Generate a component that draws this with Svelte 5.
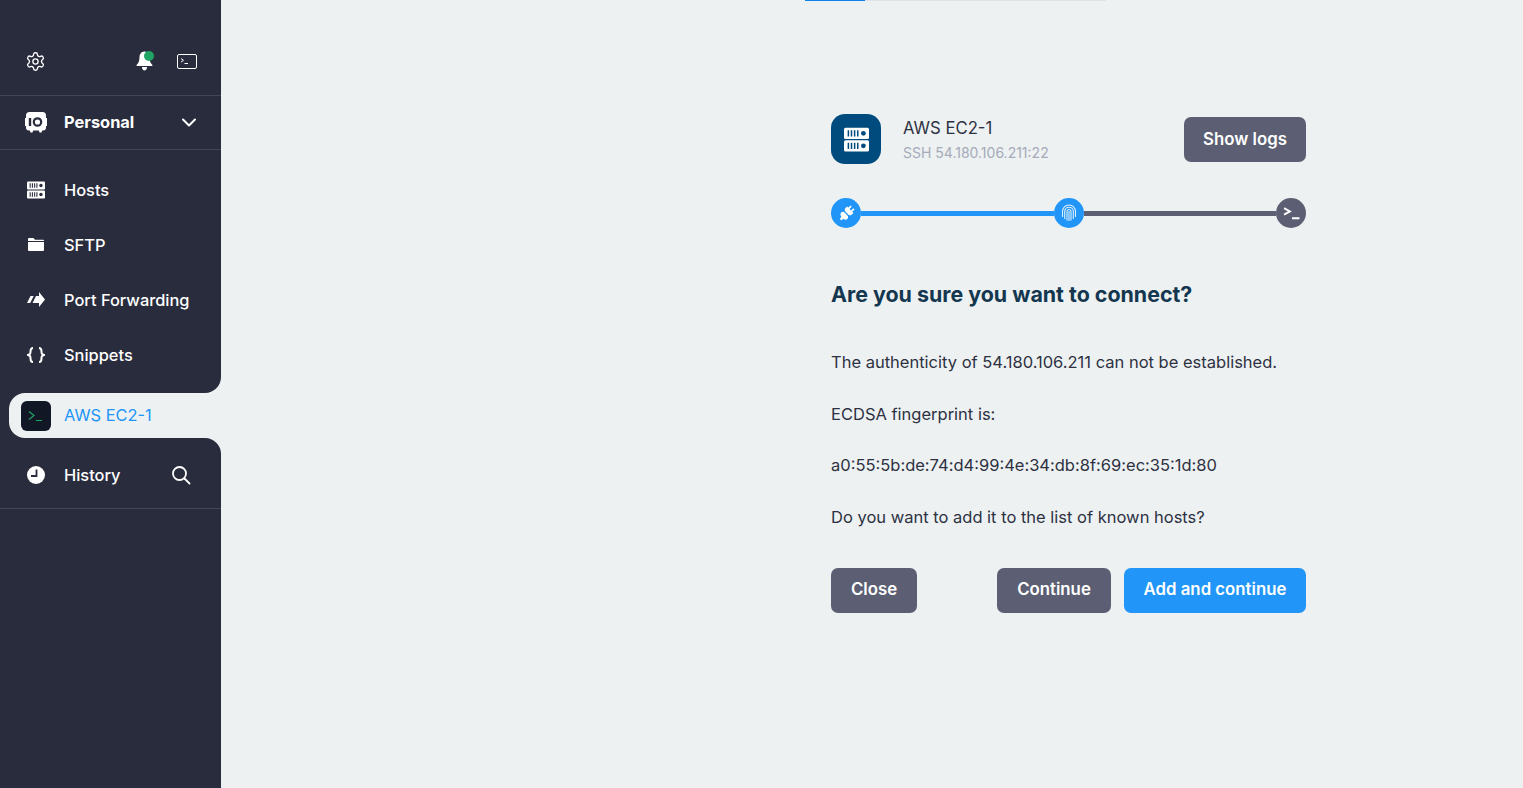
<script>
	const topItems = [
		{ label: 'Hosts', icon: 'hosts' },
		{ label: 'SFTP', icon: 'folder' },
		{ label: 'Port Forwarding', icon: 'forward' },
		{ label: 'Snippets', icon: 'braces' }
	];

	const prompts = [
		'The authenticity of 54.180.106.211 can not be established.',
		'ECDSA fingerprint is:',
		'a0:55:5b:de:74:d4:99:4e:34:db:8f:69:ec:35:1d:80',
		'Do you want to add it to the list of known hosts?'
	];
</script>

{#snippet serverIcon(fill, hole, size)}
	<svg viewBox="0 0 20 20" width={size} height={size}>
		<rect x="0" y="0.5" width="20" height="9" rx="1.2" fill={fill} />
		<rect x="0" y="10.5" width="20" height="9" rx="1.2" fill={fill} />
		<path d="M3.500 2.500v5M6 2.500v5M8.500 2.500v5M11 2.500v5M3.500 12.500v5M6 12.500v5M8.500 12.500v5M11 12.500v5" stroke={hole} stroke-width="1.200" />
		<circle cx="15.500" cy="5" r="1.900" fill={hole} />
		<circle cx="15.500" cy="15" r="1.900" fill={hole} />
	</svg>
{/snippet}

<div class="page">
	<aside class="sidebar">
		<div class="upper">
			<div class="tools">
				<svg class="gear" viewBox="0 0 24 24" width="21" height="21" fill="none" stroke="#fff" stroke-width="1.500" stroke-linejoin="round">
					<circle cx="12" cy="12" r="3" />
					<path d="M12.220 2h-.44a2 2 0 0 0-2 2v.18a2 2 0 0 1-1 1.730l-.43.25a2 2 0 0 1-2 0l-.15-.08a2 2 0 0 0-2.730.73l-.22.38a2 2 0 0 0 .73 2.730l.15.1a2 2 0 0 1 1 1.720v.51a2 2 0 0 1-1 1.740l-.15.09a2 2 0 0 0-.73 2.730l.22.38a2 2 0 0 0 2.730.73l.15-.08a2 2 0 0 1 2 0l.43.25a2 2 0 0 1 1 1.730V20a2 2 0 0 0 2 2h.44a2 2 0 0 0 2-2v-.18a2 2 0 0 1 1-1.730l.43-.25a2 2 0 0 1 2 0l.15.08a2 2 0 0 0 2.730-.73l.22-.39a2 2 0 0 0-.73-2.730l-.15-.08a2 2 0 0 1-1-1.740v-.5a2 2 0 0 1 1-1.740l.15-.09a2 2 0 0 0 .73-2.730l-.22-.38a2 2 0 0 0-2.730-.73l-.15.08a2 2 0 0 1-2 0l-.43-.25a2 2 0 0 1-1-1.730V4a2 2 0 0 0-2-2z" />
				</svg>
				<span class="spacer"></span>
				<span class="bell">
					<svg viewBox="0 0 17 20" width="17" height="20">
						<path d="M8.500 0.500C5 .5 3.500 3.500 3.500 6.500c0 3.500-1 5.500-2.800 7.300-.5.500-.2 1.200.5 1.200h14.600c.7 0 1-.7.500-1.200C14.500 12 13.500 10 13.500 6.500c0-3-1.500-6-5-6z" fill="#fff" />
						<path d="M6 16h5c0 2.200-1.100 3.500-2.500 3.500S6 18.200 6 16z" fill="#fff" />
					</svg>
					<i class="dot"></i>
				</span>
				<svg class="term" viewBox="0 0 20 15" width="20" height="15" fill="none" stroke="#fff">
					<rect x=".5" y=".5" width="19" height="14" rx="1.500" />
					<path d="M4 4.500l2.500 1.800L4 8.100M7.500 9.500h3.500" stroke-width="1" />
				</svg>
			</div>
			<div class="vault">
				<svg viewBox="0 0 22 21" width="22" height="21" class="nav-icon">
					<path d="M4.500 0h13A3.500 3.500 0 0 1 21 3.500V6h1v8h-1v1.500a3 3 0 0 1-3 3h-.8l-.7 2h-2l-.7-2H8.200l-.7 2h-2l-.7-2H4a3 3 0 0 1-3-3V14H0V6h1V3.500A3.500 3.500 0 0 1 4.500 0z" fill="#fff" />
					<rect x="3.800" y="6" width="2.400" height="8" fill="#292c3d" />
					<circle cx="12.500" cy="10" r="3.700" fill="none" stroke="#292c3d" stroke-width="2.200" />
				</svg>
				<span class="vault-name">Personal</span>
				<svg class="chevron" viewBox="0 0 14 9" width="14" height="9" fill="none" stroke="#fff" stroke-width="2" stroke-linecap="round" stroke-linejoin="round">
					<path d="M1 1.500l6 6 6-6" />
				</svg>
			</div>
			<nav class="items">
				{#each topItems as item}
					<div class="item">
						<span class="icon-slot">
							{#if item.icon === 'hosts'}
								{@render serverIcon('#fff', '#292c3d', 18)}
							{:else if item.icon === 'folder'}
								<svg viewBox="0 0 16 13" width="16" height="13"><path d="M0 1a1 1 0 0 1 1-1h4.500l1.500 1.700H15a1 1 0 0 1 1 1V3H0zM0 4h16v8a1 1 0 0 1-1 1H1a1 1 0 0 1-1-1z" fill="#fff" /></svg>
							{:else if item.icon === 'forward'}
								<svg viewBox="0 0 18 15" width="18" height="15"><path d="M3.500 4h3.200L3.200 11H0zM12 0l6 7.500-6 7.500v-4H5.500L9 4h3z" fill="#fff" /></svg>
							{:else}
								<svg viewBox="0 0 18 16" width="18" height="16" fill="none" stroke="#fff" stroke-width="2">
									<path d="M6 1C3.500 1 3.500 2.500 3.500 4.500S3.500 7 1 8c2.500 1 2.500 1.500 2.500 3.500S3.500 15 6 15M12 1c2.500 0 2.500 1.500 2.500 3.500S14.500 7 17 8c-2.500 1-2.500 1.500-2.500 3.500S14.500 15 12 15" />
								</svg>
							{/if}
						</span>
						<span>{item.label}</span>
					</div>
				{/each}
			</nav>
		</div>

		<div class="tab-wrap">
			<div class="tab">
				<span class="tab-icon">
					<svg viewBox="0 0 16 12" width="16" height="12" fill="none" stroke="#1fa463" stroke-width="1.200">
						<path d="M1 1.500L6 5.500 1 9.500M8 10.500h6" />
					</svg>
				</span>
				<span class="tab-label">AWS EC2-1</span>
			</div>
		</div>

		<div class="lower">
			<div class="item history">
				<span class="icon-slot">
					<svg viewBox="0 0 18 18" width="18" height="18">
						<circle cx="9" cy="9" r="9" fill="#fff" />
						<path d="M9.500 3.500v6.500H4" fill="none" stroke="#292c3d" stroke-width="1.800" />
					</svg>
				</span>
				<span>History</span>
				<svg class="search" viewBox="0 0 20 20" width="20" height="20" fill="none" stroke="#fff" stroke-width="1.800" stroke-linecap="round">
					<circle cx="8.500" cy="8.500" r="6.500" />
					<path d="M13.500 13.500l5 5" />
				</svg>
			</div>
		</div>
	</aside>

	<main class="main">
		<div class="progress"><i></i></div>
		<section class="dialog">
			<header class="host">
				<span class="host-icon">{@render serverIcon('#fff', '#004b7d', 25)}</span>
				<div class="host-text">
					<div class="host-name">AWS EC2-1</div>
					<div class="host-addr">SSH 54.180.106.211:22</div>
				</div>
				<button class="btn logs">Show logs</button>
			</header>

			<div class="stepper">
				<span class="step on">
					<svg viewBox="0 0 16 16" width="17" height="17" fill="#fff">
						<g transform="rotate(45 8 8)">
							<path d="M5.300 0h1.600v3H5.300zM9.100 0h1.600v3H9.100zM3.800 3h8.400v2c0 1.300-.7 2.300-2 2.500H5.800c-1.300-.2-2-1.200-2-2.500z" />
							<path d="M5.800 8.700h4.400c1.300.2 2 1.200 2 2.500 0 1.200-1.300 2.300-3 2.500V16H7v-2.300c-1.700-.2-3-1.300-3.200-2.500 0-1.300.7-2.300 2-2.500z" />
						</g>
					</svg>
				</span>
				<span class="line on"></span>
				<span class="step on">
					<svg viewBox="0 0 16 18" width="16" height="18" fill="none" stroke="#fff" stroke-width="1.100" opacity=".85">
						<path d="M1.500 13V7.500a6.500 6.500 0 0 1 13 0V13" />
						<path d="M3.700 15V7.500a4.300 4.300 0 0 1 8.600 0V15" />
						<path d="M6 16.500V7.500a2 2 0 0 1 4 0v9" />
						<path d="M8 7v10" />
					</svg>
				</span>
				<span class="line"></span>
				<span class="step">
					<svg viewBox="0 0 16 12" width="17" height="13" fill="none" stroke="#fff" stroke-width="1.800">
						<path d="M1 1L6.500 4 1 7M8.500 10.500h7" />
					</svg>
				</span>
			</div>

			<h1>Are you sure you want to connect?</h1>

			<div class="prompt">
				{#each prompts as line}
					<p>{line}</p>
				{/each}
			</div>

			<div class="actions">
				<button class="btn close">Close</button>
				<span class="spacer"></span>
				<button class="btn cont">Continue</button>
				<button class="btn primary">Add and continue</button>
			</div>
		</section>
	</main>
</div>

<style>
	:global(body) {
		margin: 0;
		background: #edf1f2;
	}
	.page {
		display: flex;
		height: 788px;
		overflow: hidden;
		font-family: Inter, Lato, sans-serif;
		color: #fff;
	}
	.sidebar {
		width: 221px;
		flex: none;
		display: flex;
		flex-direction: column;
		background: #edf1f2;
		font-size: 16.4px;
		font-weight: 500;
	}
	.upper {
		background: #292c3d;
		border-bottom-right-radius: 16px;
		height: 393px;
	}
	.tools {
		display: flex;
		align-items: center;
		height: 96px;
		box-sizing: border-box;
		padding: 27px 24px 0 25px;
		border-bottom: 1px solid #41445a;
	}
	.spacer {
		flex: 1;
	}
	.bell {
		position: relative;
		display: flex;
		margin-right: 23px;
		left: -1px;
	}
	.dot {
		position: absolute;
		top: 0;
		right: -1px;
		width: 10px;
		height: 10px;
		border-radius: 50%;
		background: #1fa463;
	}
	.vault {
		display: flex;
		align-items: center;
		height: 53px;
		box-sizing: content-box;
		padding: 0 25px 0 25px;
		border-bottom: 1px solid #41445a;
	}
	.nav-icon {
		flex: none;
	}
	.vault-name {
		margin-left: 17px;
		flex: 1;
		font-weight: 700;
		padding-bottom: 2px;
	}
	.items {
		padding-top: 12px;
	}
	.item {
		display: flex;
		align-items: center;
		height: 55px;
		padding-left: 26px;
	}
	.icon-slot {
		width: 20px;
		margin-right: 18px;
		display: flex;
		justify-content: center;
		align-items: center;
	}
	.tab-wrap {
		background: #292c3d;
		padding-left: 9px;
	}
	.tab {
		display: flex;
		align-items: center;
		height: 45px;
		padding-left: 12px;
		background: #edf1f2;
		border-radius: 16px 0 0 16px;
		color: #2196f8;
		font-weight: 400;
	}
	.tab-label {
		padding-bottom: 2px;
	}
	.tab-icon {
		width: 30px;
		height: 30px;
		border-radius: 6px;
		background: #121726;
		display: flex;
		align-items: center;
		justify-content: center;
		margin-right: 13px;
	}
	.lower {
		flex: 1;
		background: #292c3d;
		border-top-right-radius: 16px;
	}
	.history {
		height: 71px;
		box-sizing: border-box;
		padding-top: 4px;
		border-bottom: 1px solid #41445a;
	}
	.search {
		margin-left: auto;
		margin-right: 30px;
	}
	.main {
		flex: 1;
		color: #2e3142;
	}
	.progress {
		width: 301px;
		height: 1px;
		margin-left: 584px;
		background: #dfe3e8;
	}
	.progress i {
		display: block;
		width: 60px;
		height: 1px;
		background: #0a84e8;
	}
	.dialog {
		width: 475px;
		margin: 113px 0 0 610px;
	}
	.host {
		display: flex;
		align-items: center;
	}
	.host-icon {
		width: 50px;
		height: 50px;
		border-radius: 14px;
		background: #004b7d;
		display: flex;
		align-items: center;
		justify-content: center;
		margin-right: 22px;
	}
	.host-text {
		flex: 1;
	}
	.host-name {
		font-size: 16.700px;
		line-height: 26px;
		padding-top: 1px;
	}
	.host-addr {
		font-size: 14px;
		line-height: 23px;
		color: #a6abb9;
	}
	.btn {
		height: 45px;
		padding: 0;
		border: none;
		border-radius: 7px;
		background: #5c5f73;
		color: #fff;
		font: 600 16.800px Inter, Lato, sans-serif;
	}
	.btn.logs {
		width: 122px;
		margin-top: 1px;
		padding-bottom: 2px;
	}
	.btn.close {
		width: 86px;
	}
	.btn.cont {
		width: 114px;
	}
	.btn.primary {
		width: 182px;
		background: #2196f8;
		margin-left: 13px;
	}
	.actions .btn {
		padding-bottom: 3px;
	}
	.stepper {
		display: flex;
		align-items: center;
		margin-top: 34px;
	}
	.step {
		width: 30px;
		height: 30px;
		flex: none;
		border-radius: 50%;
		background: #5c5f73;
		display: flex;
		align-items: center;
		justify-content: center;
	}
	.step.on {
		background: #2196f8;
	}
	.line {
		flex: 1;
		height: 5px;
		background: #5c5f73;
	}
	.line.on {
		background: #2196f8;
	}
	h1 {
		margin: 51px 0 0;
		font-size: 21.400px;
		line-height: 30px;
		font-weight: 700;
		color: #14374f;
	}
	.prompt {
		margin-top: 40px;
		font-size: 16.500px;
	}
	.prompt p {
		margin: 0;
		height: 51.700px;
		line-height: 26px;
	}
	.actions {
		display: flex;
		margin-top: 12.200px;
	}
</style>
